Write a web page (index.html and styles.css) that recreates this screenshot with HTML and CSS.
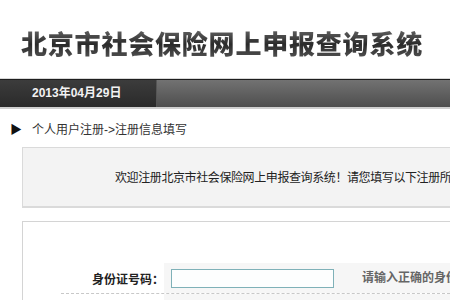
FILE: index.html
```html
<!DOCTYPE html>
<html lang="zh-CN">
<head>
    <meta charset="UTF-8">
    <title>北京市社会保险网上申报查询系统</title>
    <link rel="stylesheet" href="styles.css">
</head>
<body>
    <div class="header">
        <h1 class="title">北京市社会保险网上申报查询系统</h1>
    </div>
    <div class="navbar">
        <div class="date">2013年04月29日</div>
        <div class="nav-fill"></div>
    </div>
    <div class="crumb">
        <span class="arrow">&#9654;</span>
        <span>个人用户注册-&gt;注册信息填写</span>
    </div>
    <div class="notice">欢迎注册北京市社会保险网上申报查询系统！请您填写以下注册所需信息</div>
    <div class="form-box">
        <div class="row">
            <div class="label">身份证号码：</div>
            <div class="field"><input class="input" type="text"></div>
            <div class="hint">请输入正确的身份证号码</div>
        </div>
        <div class="row">
            <div class="label">社会保险号码：</div>
            <div class="field"><input class="input" type="text"></div>
            <div class="hint">请选用本人的社会保险号</div>
        </div>
    </div>
</body>
</html>
```

FILE: styles.css
```css
body {
    margin: 0;
    padding: 0;
    width: 450px;
    overflow: hidden;
    font-family: "Liberation Sans", "Noto Sans CJK SC", sans-serif;
    font-size: 12px;
    color: #333;
    background: #fff;
}

.header {
    height: 78px;
    border-bottom: 1px solid #d8d8d8;
    display: flex;
    align-items: center;
    padding-left: 21px;
}

.title {
    margin: 6px 0 0 0;
    font-family: "Noto Sans CJK SC", sans-serif;
    font-size: 26px;
    font-weight: 900;
    letter-spacing: 0.8px;
    white-space: nowrap;
    background: linear-gradient(#777, #2a2a2a 55%, #5a5a5a);
    -webkit-background-clip: text;
    background-clip: text;
    color: transparent;
}

.navbar {
    display: flex;
    height: 27px;
    border-top: 1px solid #1e1e1e;
    border-bottom: 2px solid #cfcfcf;
}

.date {
    width: 124px;
    padding-left: 32px;
    line-height: 27px;
    font-weight: bold;
    color: #f2f2f2;
    background: linear-gradient(#3c3c3c, #2a2a2a);
    border-right: 1px solid #555;
}

.nav-fill {
    flex: 1;
    background: linear-gradient(#727272, #4e4e4e);
}

.crumb {
    height: 38px;
    display: flex;
    align-items: center;
    padding-left: 10px;
    color: #333;
}

.arrow {
    font-size: 12px;
    color: #111;
    width: 22px;
}

.notice {
    margin-left: 22px;
    height: 58px;
    line-height: 58px;
    padding-left: 92px;
    white-space: nowrap;
    overflow: hidden;
    font-family: "Noto Sans CJK SC", sans-serif;
    letter-spacing: -0.4px;
    background: #f3f3f3;
    border: 1px solid #dadada;
    border-right: none;
    border-bottom: 2px solid #dadada;
    color: #222;
}

.form-box {
    margin-left: 22px;
    margin-top: 13px;
    padding-top: 41px;
    border-top: 1px solid #d4d4d4;
    border-left: 1px solid #d4d4d4;
}

.row {
    display: flex;
    align-items: center;
    height: 30px;
    margin-left: 38px;
    border-bottom: 1px dashed #c8c8c8;
}

.label {
    flex-shrink: 0;
    width: 103px;
    text-align: right;
    font-weight: bold;
    color: #222;
    white-space: nowrap;
}

.field {
    flex-shrink: 0;
    display: flex;
    align-items: center;
    height: 100%;
    padding-left: 7px;
    width: 184px;
    background: #f6f6f6;
}

.input {
    width: 159px;
    height: 15px;
    padding: 1px;
    margin: 0;
    border: 1px solid #7fb1b8;
    background: #fdfefe;
}

.hint {
    flex: 1;
    height: 100%;
    line-height: 30px;
    padding-left: 7px;
    color: #666;
    font-weight: bold;
    white-space: nowrap;
    overflow: hidden;
    background: #f6f6f6;
}
```
